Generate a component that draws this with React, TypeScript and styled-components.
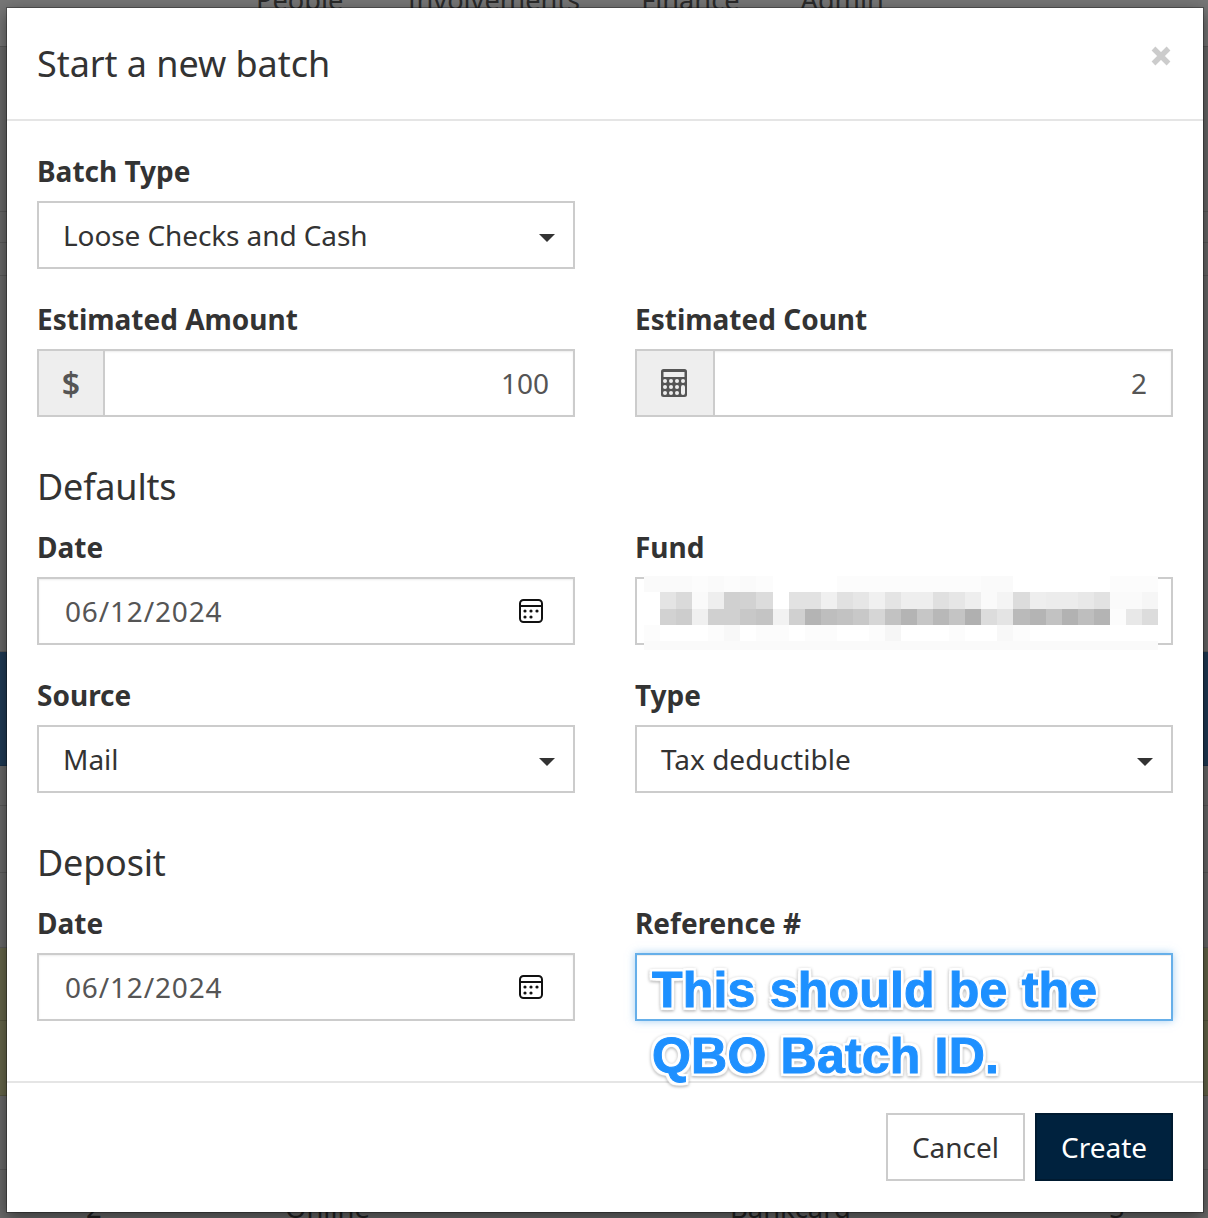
import React from "react";
import styled, { createGlobalStyle } from "styled-components";

const GlobalStyle = createGlobalStyle`
  html, body {
    margin: 0;
    padding: 0;
    background: #696969;
    font-family: "Noto Sans", "Open Sans", sans-serif;
  }
`;

const Page = styled.div`
  position: relative;
  width: 1208px;
  height: 1218px;
  overflow: hidden;
  background: #696969;
`;

const Nav = styled.div`
  display: flex;
  gap: 61px;
  padding-left: 256px;
  height: 46px;
  line-height: 0;
  font-size: 27.2px;
  color: #2a2a2a;
  background: #767676;
  border-bottom: 1px solid #5a5a5a;
`;

const NavFirst = styled.span`
  margin-right: 3px;
`;

const Stripe = styled.div<{ $height: number; $color?: string }>`
  box-sizing: border-box;
  height: ${(p) => p.$height}px;
  background: ${(p) => p.$color || "#696969"};
  border-bottom: 1px solid rgba(0, 0, 0, 0.14);
`;

const TableRow = styled.div`
  box-sizing: border-box;
  height: 53px;
  padding-left: 86px;
  display: grid;
  grid-template-columns: 199px 445px 379px auto;
  align-items: end;
  font-size: 27.4px;
  line-height: 30px;
  color: #222;
`;

const Modal = styled.div`
  position: absolute;
  left: 7px;
  top: 8px;
  width: 1196px;
  height: 1204px;
  background: #fff;
  box-shadow: 0 0 0 1px rgba(0, 0, 0, 0.3), 0 5px 15px rgba(0, 0, 0, 0.5);
  display: flex;
  flex-direction: column;
  color: #333;
`;

const Header = styled.div`
  height: 111px;
  border-bottom: 2px solid #e5e5e5;
  padding: 0 30px;
  display: flex;
  align-items: center;
  justify-content: space-between;
`;

const Title = styled.h4`
  margin: 0;
  font-size: 36px;
  font-weight: 400;
  letter-spacing: -0.06px;
  color: #333;
`;

const CloseSlot = styled.span`
  display: flex;
  margin: 0 2px 16px 0;
`;

const Body = styled.div`
  flex: 1;
  padding: 30px 30px 0;
  display: flex;
  flex-direction: column;
`;

const Row = styled.div`
  display: grid;
  grid-template-columns: 538px 538px;
  column-gap: 60px;
  margin-bottom: 30px;
`;

const Field = styled.div``;

const Label = styled.label`
  display: block;
  font-size: 28px;
  font-weight: 700;
  line-height: 40px;
  margin-bottom: 10px;
  color: #333;
`;

const Box = styled.div<{ $focus?: boolean }>`
  height: 68px;
  box-sizing: border-box;
  border: 2px solid ${(p) => (p.$focus ? "#66afe9" : "#ccc")};
  box-shadow: ${(p) =>
    p.$focus
      ? "inset 0 1px 1px rgba(0,0,0,.075), 0 0 8px rgba(102,175,233,.6)"
      : "inset 0 1px 2px rgba(0,0,0,.075)"};
  display: flex;
  align-items: center;
  font-size: 28px;
  color: #555;
`;

const SelectBox = styled(Box)<{ $tight?: boolean }>`
  justify-content: space-between;
  padding: 0 18px 0 24px;
  color: #333;
  letter-spacing: ${(p) => (p.$tight ? "-0.1px" : "0")};
  box-shadow: none;
`;

const Caret = styled.span`
  width: 0;
  height: 0;
  border-left: 8px solid transparent;
  border-right: 8px solid transparent;
  border-top: 8px solid #333;
  margin-top: 5px;
`;

const Addon = styled.span<{ $width: number }>`
  box-sizing: border-box;
  width: ${(p) => p.$width}px;
  align-self: stretch;
  flex: none;
  background: #eee;
  border-right: 2px solid #ccc;
  display: flex;
  align-items: center;
  justify-content: center;
  font-size: 32px;
  font-weight: 600;
  color: #555;
`;

const Value = styled.span`
  flex: 1;
  text-align: right;
  padding-right: 24px;
`;

const DateText = styled.span`
  flex: 1;
  padding-left: 26px;
  letter-spacing: 0.85px;
`;

const CalendarSlot = styled.span`
  display: flex;
  margin-right: 29px;
`;

const FundBox = styled(Box)`
  position: relative;
  box-shadow: none;
`;

const Blur = styled.div`
  position: absolute;
  left: 7px;
  top: -3px;
  width: 514px;
  height: 74px;
  display: grid;
  grid-template-columns: repeat(32, 1fr);
  grid-template-rows: 16px 17px 16px 16px 9px;
  background: #fbfbfb;
`;

const BlurCell = styled.span<{ $shade: number }>`
  background: rgb(${(p) => p.$shade}, ${(p) => p.$shade}, ${(p) => p.$shade});
`;

const SectionTitle = styled.h4`
  margin: 15px 0;
  font-size: 36px;
  font-weight: 400;
  line-height: 50px;
  letter-spacing: -0.2px;
  color: #333;
`;

const Callout = styled.div`
  position: absolute;
  left: 652px;
  top: 957px;
  font-family: "Liberation Sans", Arial, sans-serif;
  font-size: 50px;
  font-weight: 700;
  line-height: 66px;
  color: #1e90ff;
  letter-spacing: 0.2px;
  -webkit-text-stroke: 1px #1e90ff;
  text-shadow: 3px 0 1px #fff, -3px 0 1px #fff, 0 3px 1px #fff, 0 -3px 1px #fff, 3px 3px 1px #fff,
    -3px -3px 1px #fff, 3px -3px 1px #fff, -3px 3px 1px #fff;
  filter: drop-shadow(0 1px 1.5px rgba(0, 0, 0, 0.35));
  pointer-events: none;
`;

const Footer = styled.div`
  box-sizing: border-box;
  height: 131px;
  border-top: 2px solid #e5e5e5;
  display: flex;
  justify-content: flex-end;
  align-items: flex-start;
  gap: 10px;
  padding: 30px 30px 0 0;
`;

const Button = styled.button<{ $primary?: boolean }>`
  height: 68px;
  width: ${(p) => (p.$primary ? 138 : 139)}px;
  font: 400 28px "Noto Sans", sans-serif;
  background: ${(p) => (p.$primary ? "#00223e" : "#fff")};
  color: ${(p) => (p.$primary ? "#fff" : "#333")};
  border: 2px solid ${(p) => (p.$primary ? "#001a30" : "#ccc")};
  padding: 0;
`;

const CalculatorSvg = styled.svg`
  margin-left: -2px;
`;

const CloseIcon = () => (
  <svg width="20" height="20" viewBox="0 0 20 20">
    <path d="M2.5 2.5l15 15M17.5 2.5l-15 15" stroke="#ccc" strokeWidth="5.4" />
  </svg>
);

const Calendar = () => (
  <svg width="26" height="26" viewBox="0 0 26 26" fill="none">
    <rect x="2" y="2" width="22" height="22" rx="3.5" stroke="#111" strokeWidth="2" />
    <path d="M2 8h22" stroke="#111" strokeWidth="2" />
    {[
      [7, 13],
      [13, 13],
      [19, 13],
      [7, 19],
      [13, 19],
    ].map(([x, y]) => (
      <circle key={`${x}-${y}`} cx={x} cy={y} r="1.6" fill="#111" />
    ))}
  </svg>
);

const Calculator = () => (
  <CalculatorSvg width="26" height="28" viewBox="0 0 26 28">
    <rect width="26" height="28" rx="2.5" fill="#555" />
    <rect x="2.5" y="3" width="21" height="5" fill="#eee" />
    {[4, 10, 16].flatMap((x) =>
      [12, 18, 24].map((y) => <circle key={`${x}-${y}`} cx={x} cy={y} r="2" fill="#eee" />)
    )}
    <circle cx="22" cy="12" r="2" fill="#eee" />
    <rect x="20" y="16" width="4" height="10" rx="2" fill="#eee" />
  </CalculatorSvg>
);

const blurShades = [
  [250, 250, 250, 252, 250, 252, 250, 252, 255, 255, 255, 255, 252, 252, 252, 252, 252, 252, 252, 252, 252, 250, 250, 255, 255, 255, 255, 255, 255, 252, 252, 252],
  [255, 228, 218, 250, 238, 208, 210, 220, 255, 226, 226, 240, 225, 230, 240, 228, 238, 238, 224, 230, 238, 250, 244, 220, 238, 236, 236, 232, 226, 250, 250, 246],
  [255, 210, 205, 240, 208, 208, 200, 196, 242, 208, 180, 190, 194, 200, 214, 194, 180, 198, 184, 196, 176, 220, 228, 186, 180, 194, 178, 190, 180, 252, 232, 220],
  [252, 255, 255, 255, 252, 248, 255, 252, 252, 255, 252, 252, 255, 255, 252, 246, 255, 255, 255, 252, 255, 255, 248, 252, 255, 255, 255, 255, 255, 255, 255, 255],
  [250, 250, 250, 250, 250, 250, 250, 250, 250, 250, 250, 250, 250, 250, 250, 250, 250, 250, 250, 250, 250, 250, 250, 250, 250, 250, 250, 250, 250, 250, 250, 250],
];

export default function App() {
  return (
    <Page>
      <GlobalStyle />
      <Nav>
        <NavFirst>People</NavFirst>
        <span>Involvements</span>
        <span>Finance</span>
        <span>Admin</span>
      </Nav>
      <Stripe $height={165} />
      <Stripe $height={31} />
      <Stripe $height={33} />
      <Stripe $height={376} />
      <Stripe $height={114} $color="#1f3a55" />
      <Stripe $height={40} />
      <Stripe $height={67} />
      <Stripe $height={75} />
      <Stripe $height={73} $color="#66664a" />
      <Stripe $height={75} $color="#66664a" />
      <Stripe $height={74} />
      <TableRow>
        <span>2</span>
        <span>Online</span>
        <span>Bankcard</span>
        <span>5</span>
      </TableRow>
      <Modal>
        <Header>
          <Title>Start a new batch</Title>
          <CloseSlot>
            <CloseIcon />
          </CloseSlot>
        </Header>
        <Body>
          <Row>
            <Field>
              <Label>Batch Type</Label>
              <SelectBox $tight>
                Loose Checks and Cash
                <Caret />
              </SelectBox>
            </Field>
          </Row>
          <Row>
            <Field>
              <Label>Estimated Amount</Label>
              <Box>
                <Addon $width={66}>$</Addon>
                <Value>100</Value>
              </Box>
            </Field>
            <Field>
              <Label>Estimated Count</Label>
              <Box>
                <Addon $width={78}>
                  <Calculator />
                </Addon>
                <Value>2</Value>
              </Box>
            </Field>
          </Row>
          <SectionTitle>Defaults</SectionTitle>
          <Row>
            <Field>
              <Label>Date</Label>
              <Box>
                <DateText>06/12/2024</DateText>
                <CalendarSlot>
                  <Calendar />
                </CalendarSlot>
              </Box>
            </Field>
            <Field>
              <Label>Fund</Label>
              <FundBox>
                <Blur>
                  {blurShades.flatMap((row, r) =>
                    row.map((shade, c) => <BlurCell key={`${r}-${c}`} $shade={shade} />)
                  )}
                </Blur>
              </FundBox>
            </Field>
          </Row>
          <Row>
            <Field>
              <Label>Source</Label>
              <SelectBox>
                Mail
                <Caret />
              </SelectBox>
            </Field>
            <Field>
              <Label>Type</Label>
              <SelectBox>
                Tax deductible
                <Caret />
              </SelectBox>
            </Field>
          </Row>
          <SectionTitle>Deposit</SectionTitle>
          <Row>
            <Field>
              <Label>Date</Label>
              <Box>
                <DateText>06/12/2024</DateText>
                <CalendarSlot>
                  <Calendar />
                </CalendarSlot>
              </Box>
            </Field>
            <Field>
              <Label>Reference #</Label>
              <Box $focus />
            </Field>
          </Row>
        </Body>
        <Footer>
          <Button>Cancel</Button>
          <Button $primary>Create</Button>
        </Footer>
      </Modal>
      <Callout>
        This should be the
        <br />
        QBO Batch ID.
      </Callout>
    </Page>
  );
}
